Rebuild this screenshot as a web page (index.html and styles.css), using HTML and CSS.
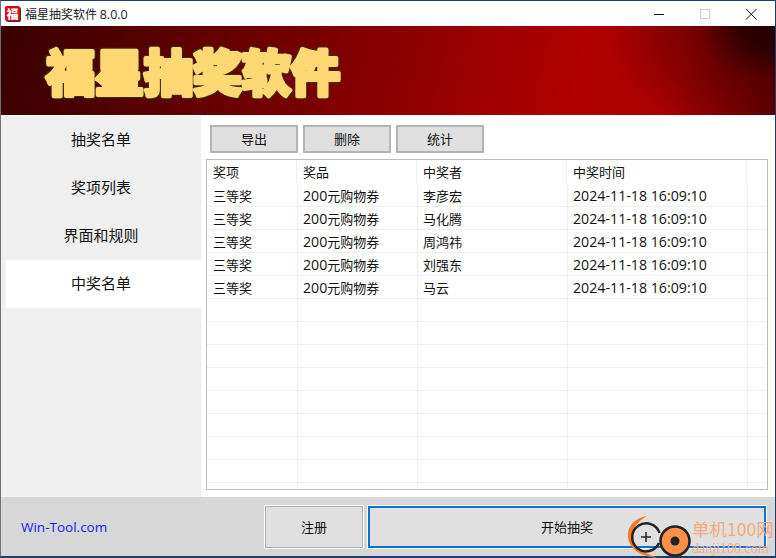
FILE: index.html
```html
<!DOCTYPE html>
<html lang="zh">
<head>
<meta charset="utf-8">
<title>福星抽奖软件 8.0.0</title>
<link rel="stylesheet" href="styles.css">
</head>
<body>
<div class="window">
  <header class="titlebar">
    <div class="app-icon"><span>福</span></div>
    <div class="app-title">福星抽奖软件 <span class="ver">8.0.0</span></div>
    <div class="win-controls">
      <svg class="win-btn" width="46" height="26" viewBox="0 0 46 26"><path d="M18 13.500H28" stroke="#111" fill="none"/></svg>
      <svg class="win-btn" width="46" height="26" viewBox="0 0 46 26"><rect x="18.500" y="8.500" width="9" height="9" stroke="#ccc" fill="none"/></svg>
      <svg class="win-btn" width="46" height="26" viewBox="0 0 46 26"><path d="M18 8L28.500 18.500M28.500 8L18 18.500" stroke="#111" fill="none"/></svg>
    </div>
  </header>
  <div class="banner">
    <svg class="banner-svg" width="345" height="89" viewBox="0 0 345 89"><text class="banner-text" x="45" y="65">福星抽奖软件</text></svg>
  </div>
  <div class="main">
    <nav class="sidebar">
      <div class="tab">抽奖名单</div>
      <div class="tab">奖项列表</div>
      <div class="tab">界面和规则</div>
      <div class="tab active">中奖名单</div>
    </nav>
    <section class="content">
      <div class="toolbar">
        <button class="btn tool">导出</button>
        <button class="btn tool">删除</button>
        <button class="btn tool">统计</button>
      </div>
      <div class="grid">
        <div class="row head"><div>奖项</div><div>奖品</div><div>中奖者</div><div>中奖时间</div><div></div></div>
        <div class="row"><div>三等奖</div><div><span class="num">200</span>元购物券</div><div>李彦宏</div><div><span class="num">2024-11-18 16:09:10</span></div><div></div></div>
        <div class="row"><div>三等奖</div><div><span class="num">200</span>元购物券</div><div>马化腾</div><div><span class="num">2024-11-18 16:09:10</span></div><div></div></div>
        <div class="row"><div>三等奖</div><div><span class="num">200</span>元购物券</div><div>周鸿祎</div><div><span class="num">2024-11-18 16:09:10</span></div><div></div></div>
        <div class="row"><div>三等奖</div><div><span class="num">200</span>元购物券</div><div>刘强东</div><div><span class="num">2024-11-18 16:09:10</span></div><div></div></div>
        <div class="row"><div>三等奖</div><div><span class="num">200</span>元购物券</div><div>马云</div><div><span class="num">2024-11-18 16:09:10</span></div><div></div></div>
        <div class="row"><div></div><div></div><div></div><div></div><div></div></div>
        <div class="row"><div></div><div></div><div></div><div></div><div></div></div>
        <div class="row"><div></div><div></div><div></div><div></div><div></div></div>
        <div class="row"><div></div><div></div><div></div><div></div><div></div></div>
        <div class="row"><div></div><div></div><div></div><div></div><div></div></div>
        <div class="row"><div></div><div></div><div></div><div></div><div></div></div>
        <div class="row"><div></div><div></div><div></div><div></div><div></div></div>
        <div class="row"><div></div><div></div><div></div><div></div><div></div></div>
        <div class="row stub"><div></div><div></div><div></div><div></div><div></div></div>
      </div>
    </section>
  </div>
  <footer class="footer">
    <div class="link">Win-Tool.com</div>
    <button class="btn register">注册</button>
    <button class="btn start">开始抽奖</button>
  </footer>
  <div class="watermark">
    <svg class="wm-logo" width="70" height="44" viewBox="0 0 70 44">
      <path d="M21 1C8 3 1 12 2 22C3 33 13 41 31 43C20 38 8 33 7 22C6 13 12 6 21 1Z" fill="#f47a20"/>
      <path d="M33.500 18A14 14 0 1 0 33 28" stroke="#222" stroke-width="2.500" fill="none"/>
      <path d="M20 17V27M15 22H25" stroke="#222" stroke-width="1.500"/>
      <circle cx="49" cy="26" r="14.500" fill="#fb9148" stroke="#222" stroke-width="2.500"/>
      <circle cx="49" cy="26" r="4.500" fill="#222"/>
    </svg>
    <div class="wm-text">
      <div class="wm-cn">单机100网</div>
      <div class="wm-en">danji100.com</div>
    </div>
  </div>
</div>
</body>
</html>
```
FILE: styles.css
```css
* { box-sizing: border-box; }
html, body { margin: 0; padding: 0; }
body { width: 776px; height: 558px; overflow: hidden; font-family: "Noto Sans CJK SC", "Liberation Sans", sans-serif; color: #111; }
.window { position: relative; width: 776px; height: 558px; display: flex; flex-direction: column; background: #fff; border-top: 1px solid #1b3d66; border-left: 1px solid #707070; border-right: 1px solid #1b3d66; border-bottom: 2px solid #1b3d66; }
.titlebar { height: 25px; display: flex; align-items: center; background: #fff; flex: none; }
.app-icon { width: 15px; height: 15px; margin: 0 1px 0 4px; background: #e5000f; border-radius: 2px; box-shadow: 1px 1px 0 #333; display: flex; align-items: center; justify-content: center; }
.app-icon span { font-size: 12px; line-height: 15px; font-weight: 900; color: #fff; }
.app-title { margin-left: 4px; font-size: 12px; line-height: 25px; color: #222; }
.ver { font-family: "Open Sans", sans-serif; font-size: 12.500px; }
.win-controls { margin-left: auto; display: flex; margin-right: 1px; }
.win-btn { display: block; }
.banner { height: 89px; flex: none; background:
  radial-gradient(ellipse 170px 120px at 100% 0, rgba(32,0,0,.95) 0, rgba(32,0,0,.85) 20%, rgba(40,0,0,.4) 45%, rgba(60,0,0,0) 100%),
  linear-gradient(103deg, #380000 0, #7c0000 42%, #9a0000 60%, #b00000 74%, #a80000 87%, #6c0000 100%); }
.banner-svg { display: block; }
.banner-text { font-family: "Noto Sans CJK SC", sans-serif; font-weight: 900; font-size: 49px; fill: #ffd873; stroke: #ffd873; stroke-width: 4px; stroke-linejoin: round; stroke-linecap: round; filter: drop-shadow(1px 1px 0 #3d2a10) drop-shadow(-1px -1px 0 #3d2a10); }
.main { flex: 1; min-height: 0; display: flex; }
.sidebar { width: 200px; flex: none; background: #efefef; margin-top: 1px; padding: 0 0 0 5px; }
.tab { height: 48px; display: flex; align-items: center; justify-content: center; font-size: 15px; line-height: 46px; padding: 0 5px 2px 0; }
.tab.active { background: #fff; }
.content { flex: 1; min-width: 0; display: flex; flex-direction: column; padding: 10px 7px 7px 5px; background: #fff; }
.toolbar { display: flex; gap: 5px; padding-left: 4px; flex: none; height: 28px; margin-bottom: 6px; }
.btn { font-family: "Noto Sans CJK SC", sans-serif; color: #111; background: #e0e0e0; border: 1px solid #adadad; outline: 1px solid #fff; outline-offset: 0; padding: 0; cursor: default; }
.tool { width: 88px; height: 28px; font-size: 13px; line-height: 24px; outline: none; border: 2px solid #b4b4b4; }
.grid { flex: 1; min-height: 0; border: 1px solid #bdbdbd; padding-right: 1px; overflow: hidden; display: flex; flex-direction: column; }
.row { display: grid; grid-template-columns: 91px 120px 150px 180px 19px; height: 23px; flex: none; font-size: 13px; line-height: 22px; border-bottom: 1px solid #efefef; }
.row > div { border-right: 1px solid #efefef; padding: 1px 0 0 5px; white-space: nowrap; overflow: hidden; }
.row > div:first-child { padding-left: 6px; }
.row > div:last-child { border-right: 0; }
.row.head { grid-template-columns: 90px 120px 150px 180px 20px; height: 24px; line-height: 24px; border-bottom: 0; }
.row.head > div { padding: 0 0 0 6px; }
.row.stub { height: 5px; border-bottom: 0; }
.row.stub > div { padding: 0; }
.num { font-family: "Open Sans", sans-serif; font-size: 14.200px; }
.footer { height: 59px; flex: none; background: #d7d7d7; display: flex; align-items: flex-start; padding-top: 9px; }
.link { font-family: "Open Sans", sans-serif; font-size: 13.500px; line-height: 42px; color: #1a1aee; margin-left: 20px; width: 244px; }
.register { width: 98px; height: 42px; font-size: 13px; padding-bottom: 2px; }
.start { width: 398px; height: 42px; font-size: 13px; margin-left: 5px; border: 2px solid #0a74d6; padding-bottom: 2px; }
.watermark { position: absolute; left: 625px; top: 514px; display: flex; align-items: flex-start; }
.wm-logo { display: block; }
.wm-text { margin-left: -4px; margin-top: .500px; color: #f8ab7c; }
.wm-cn { font-size: 17.500px; line-height: 25px; }
.wm-en { font-size: 14px; line-height: 16px; font-family: "Liberation Serif", serif; }
```
